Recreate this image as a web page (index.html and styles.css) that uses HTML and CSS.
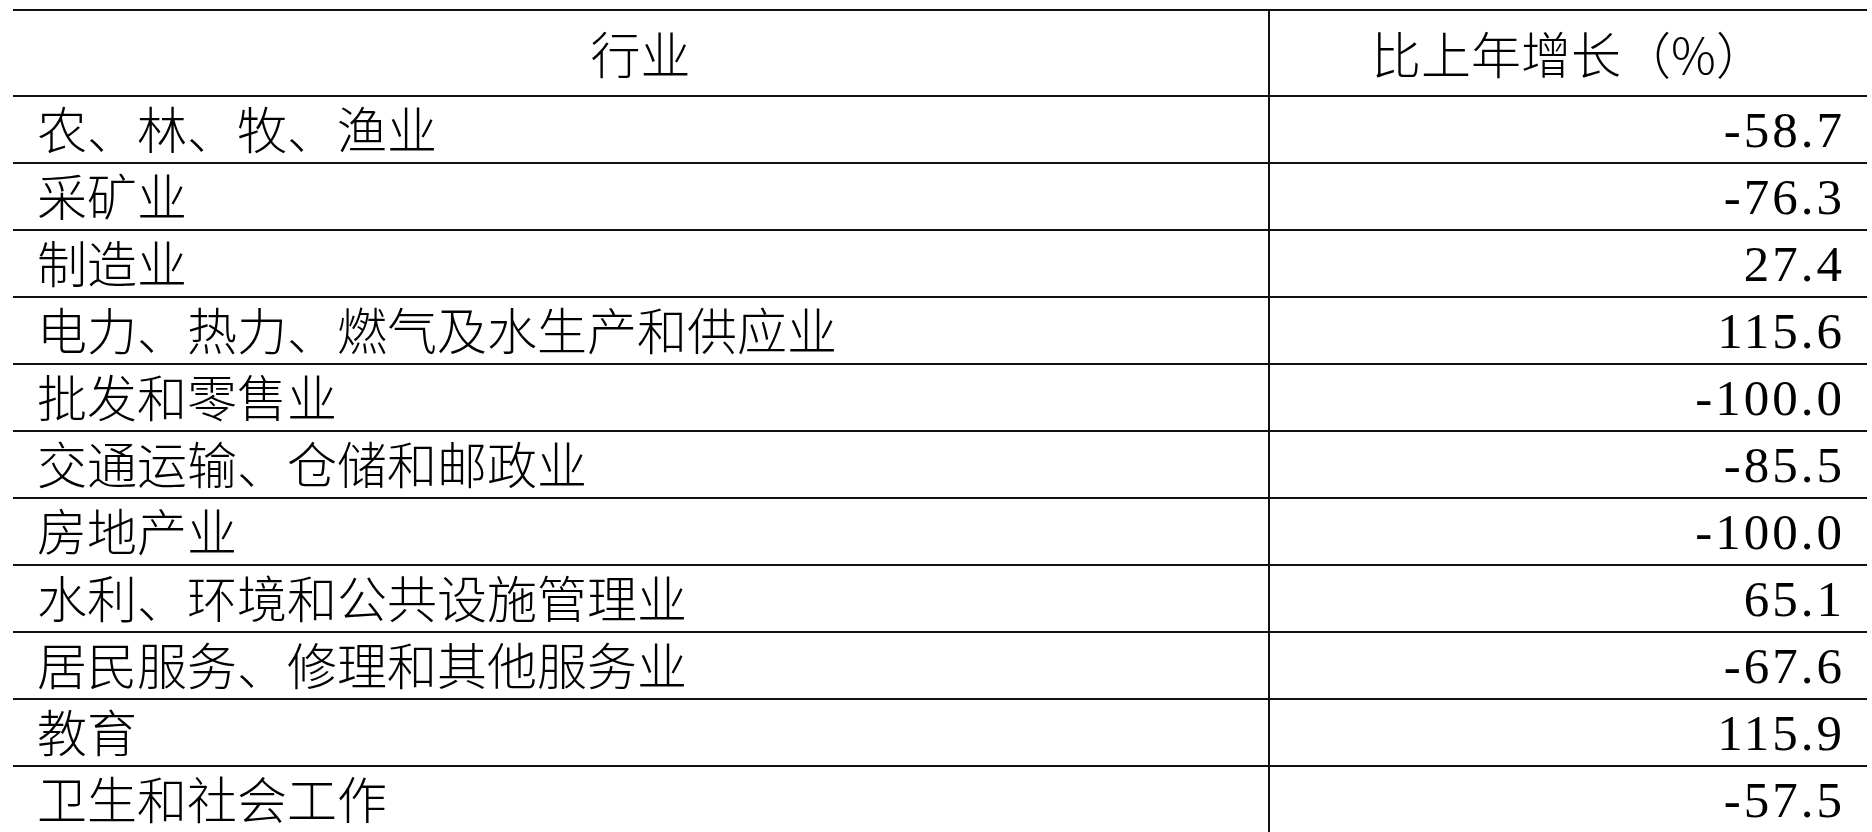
FILE: index.html
```html
<!DOCTYPE html>
<html lang="zh-CN">
<head>
<meta charset="utf-8">
<title>行业增长</title>
<link rel="stylesheet" href="styles.css">
</head>
<body>
<table class="data">
  <thead>
    <tr><th class="name"><div class="cell head">行业</div></th><th class="val"><div class="cell head">比上年增长（%）</div></th></tr>
  </thead>
  <tbody>
    <tr><td class="name"><div class="cell">农、林、牧、渔业</div></td><td class="num"><div class="cell">-58.7</div></td></tr>
    <tr><td class="name"><div class="cell">采矿业</div></td><td class="num"><div class="cell">-76.3</div></td></tr>
    <tr><td class="name"><div class="cell">制造业</div></td><td class="num"><div class="cell">27.4</div></td></tr>
    <tr><td class="name"><div class="cell">电力、热力、燃气及水生产和供应业</div></td><td class="num"><div class="cell">115.6</div></td></tr>
    <tr><td class="name"><div class="cell">批发和零售业</div></td><td class="num"><div class="cell">-100.0</div></td></tr>
    <tr><td class="name"><div class="cell">交通运输、仓储和邮政业</div></td><td class="num"><div class="cell">-85.5</div></td></tr>
    <tr><td class="name"><div class="cell">房地产业</div></td><td class="num"><div class="cell">-100.0</div></td></tr>
    <tr><td class="name"><div class="cell">水利、环境和公共设施管理业</div></td><td class="num"><div class="cell">65.1</div></td></tr>
    <tr><td class="name"><div class="cell">居民服务、修理和其他服务业</div></td><td class="num"><div class="cell">-67.6</div></td></tr>
    <tr><td class="name"><div class="cell">教育</div></td><td class="num"><div class="cell">115.9</div></td></tr>
    <tr><td class="name"><div class="cell">卫生和社会工作</div></td><td class="num"><div class="cell">-57.5</div></td></tr>
  </tbody>
</table>
</body>
</html>
```
FILE: styles.css
```css
html, body {
  margin: 0;
  padding: 0;
  background: #ffffff;
}
body {
  padding: 9px 5px 0 13px;
  font-family: "Noto Sans CJK SC", "Noto Sans CJK JP", sans-serif;
  color: #000;
}
.data {
  width: 1854px;
  border-collapse: collapse;
  table-layout: fixed;
}
.data th, .data td {
  border-top: 2px solid #111;
  border-bottom: 2px solid #111;
  padding: 0;
  font-size: 50px;
  font-weight: 300;
  white-space: nowrap;
}
.data .name {
  width: 1255px;
  border-right: 2px solid #111;
}
.cell {
  box-sizing: border-box;
  height: 65px;
  display: flex;
  align-items: center;
  line-height: 50px;
}
.cell.head {
  height: 84px;
  justify-content: center;
  padding-bottom: 2px;
}
.name .cell {
  padding: 0 0 6px 24px;
}
.name .cell.head {
  padding: 0 0 2px 0;
}
.num .cell {
  justify-content: flex-end;
  padding-right: 22px;
  font-family: "Liberation Serif", "Noto Sans CJK SC", serif;
  font-size: 51px;
  letter-spacing: 3px;
}
```
